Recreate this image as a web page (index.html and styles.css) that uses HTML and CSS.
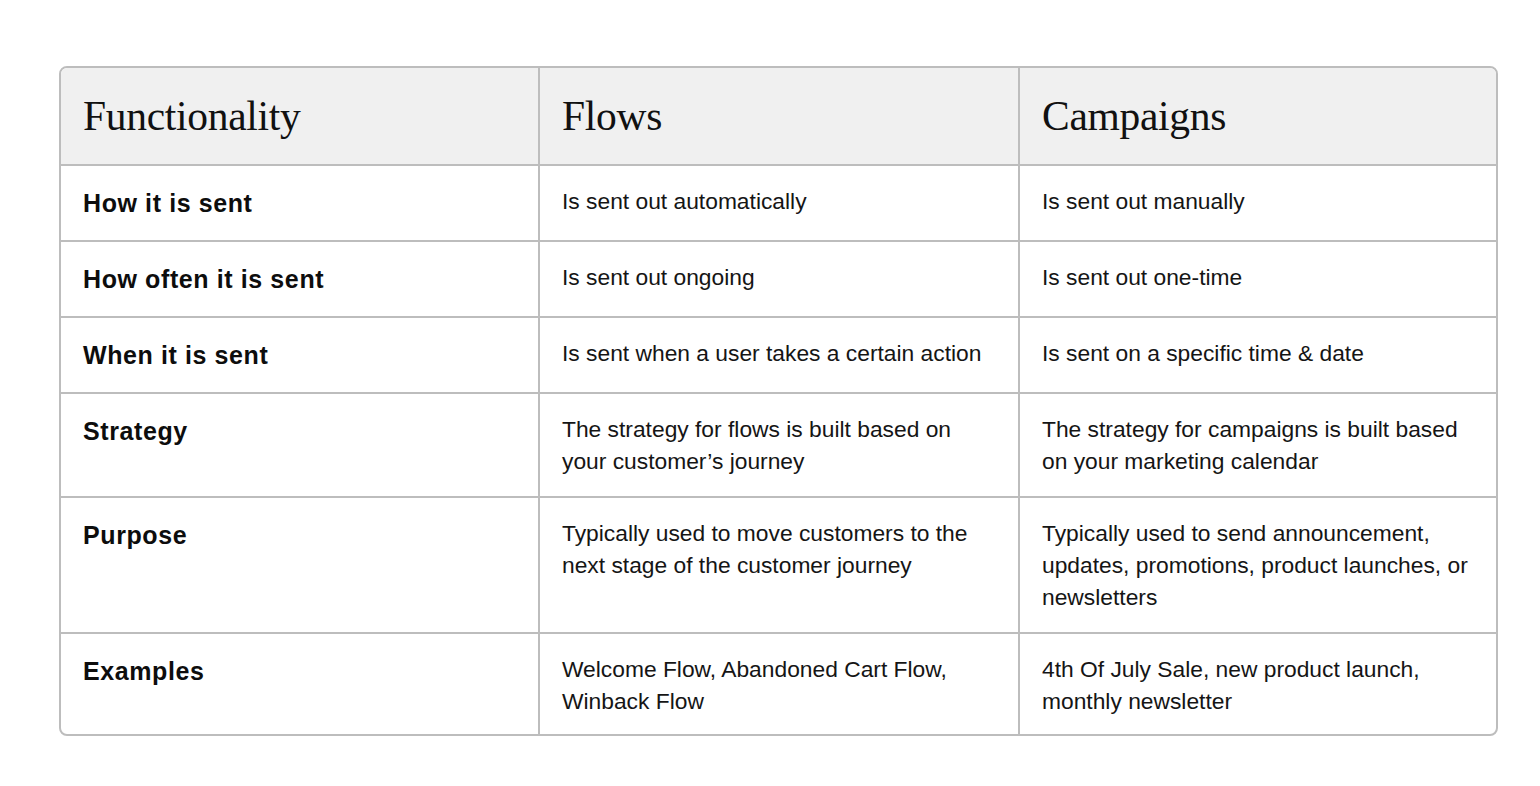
FILE: index.html
```html
<!DOCTYPE html>
<html lang="en">
<head>
<meta charset="utf-8">
<title>Flows vs Campaigns</title>
<link rel="stylesheet" href="styles.css">
</head>
<body>
<div class="page">
  <div class="compare">
    <div class="cell head">Functionality</div>
    <div class="cell head">Flows</div>
    <div class="cell head last-col">Campaigns</div>

    <div class="cell label">How it is sent</div>
    <div class="cell">Is sent out automatically</div>
    <div class="cell last-col">Is sent out manually</div>

    <div class="cell label">How often it is sent</div>
    <div class="cell">Is sent out ongoing</div>
    <div class="cell last-col">Is sent out one-time</div>

    <div class="cell label">When it is sent</div>
    <div class="cell">Is sent when a user takes a certain action</div>
    <div class="cell last-col">Is sent on a specific time &amp; date</div>

    <div class="cell label">Strategy</div>
    <div class="cell">The strategy for flows is built based on your customer’s journey</div>
    <div class="cell last-col">The strategy for campaigns is built based on your marketing calendar</div>

    <div class="cell label">Purpose</div>
    <div class="cell">Typically used to move customers to the next stage of the customer journey</div>
    <div class="cell last-col">Typically used to send announcement, updates, promotions, product launches, or newsletters</div>

    <div class="cell label last-row">Examples</div>
    <div class="cell last-row">Welcome Flow, Abandoned Cart Flow, Winback Flow</div>
    <div class="cell last-row last-col">4th Of July Sale, new product launch, monthly newsletter</div>
  </div>
</div>
</body>
</html>
```

FILE: styles.css
```css
html, body {
  margin: 0;
  padding: 0;
  background: #ffffff;
}

.page {
  padding: 66px 43px 40px 59px;
}

.compare {
  box-sizing: border-box;
  width: 1439px;
  display: grid;
  grid-template-columns: 479px 480px 1fr;
  border: 2px solid #bdbdbd;
  border-radius: 8px;
  overflow: hidden;
  font-family: "Liberation Sans", Arial, sans-serif;
  color: #151515;
}

.cell {
  box-sizing: border-box;
  padding: 19px 24px 19px 22px;
  border-right: 2px solid #bdbdbd;
  border-bottom: 2px solid #bdbdbd;
  font-size: 22.8px;
  line-height: 32px;
}

.cell.last-col {
  border-right: none;
}

.cell.last-row {
  border-bottom: none;
  padding-bottom: 17px;
}

.head {
  background: #f0f0f0;
  font-family: "Liberation Serif", "Times New Roman", serif;
  font-size: 41.5px;
  line-height: 48px;
  letter-spacing: -0.3px;
  color: #111111;
  padding-top: 24px;
  padding-bottom: 24px;
}

.label {
  font-weight: bold;
  font-size: 25px;
  line-height: 36px;
  letter-spacing: 0.6px;
  color: #0d0d0d;
}
```
